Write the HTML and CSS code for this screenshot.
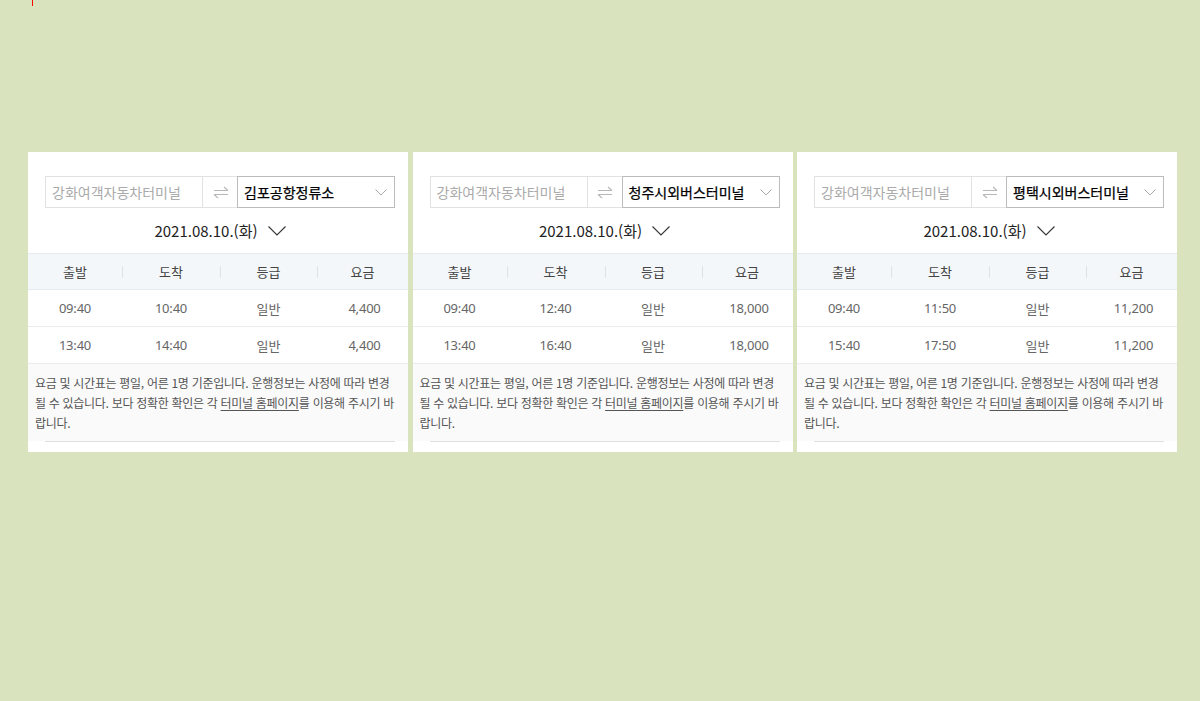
FILE: index.html
```html
<!DOCTYPE html>
<html lang="ko">
<head>
<meta charset="utf-8">
<title>시간표</title>
<link rel="stylesheet" href="styles.css">
</head>
<body>
<div class="marker"></div>
<div class="cards">
  <section class="card">
    <div class="route">
      <div class="from">강화여객자동차터미널</div>
      <div class="swap"><svg width="16" height="13" viewBox="0 0 16 13"><path d="M1 4.5H15M11 1L15 4.5M1 8.5H15M1 8.5L5 12" fill="none" stroke="#b8b8b8" stroke-width="1.1"/></svg></div>
      <div class="to"><span>김포공항정류소</span><svg class="sel-arrow" width="12" height="7" viewBox="0 0 12 7"><path d="M0.5 0.5L6 6L11.5 0.5" fill="none" stroke="#aaa" stroke-width="1"/></svg></div>
    </div>
    <div class="date"><span>2021.08.10.(화)</span><svg width="18" height="10" viewBox="0 0 18 10"><path d="M0.5 0.5L9 9L17.5 0.5" fill="none" stroke="#333" stroke-width="1.1"/></svg></div>
    <div class="thead"><div class="th">출발</div><div class="th">도착</div><div class="th">등급</div><div class="th">요금</div></div>
    <div class="tr"><div class="num">09:40</div><div class="num">10:40</div><div>일반</div><div class="num">4,400</div></div>
    <div class="tr"><div class="num">13:40</div><div class="num">14:40</div><div>일반</div><div class="num">4,400</div></div>
    <p class="notice">요금 및 시간표는 평일, 어른 1명 기준입니다. 운행정보는 사정에 따라 변경 될 수 있습니다. 보다 정확한 확인은 각 <u>터미널 홈페이지</u>를 이용해 주시기 바랍니다.</p>
    <div class="rule"></div>
  </section>
  <section class="card">
    <div class="route">
      <div class="from">강화여객자동차터미널</div>
      <div class="swap"><svg width="16" height="13" viewBox="0 0 16 13"><path d="M1 4.5H15M11 1L15 4.5M1 8.5H15M1 8.5L5 12" fill="none" stroke="#b8b8b8" stroke-width="1.1"/></svg></div>
      <div class="to"><span>청주시외버스터미널</span><svg class="sel-arrow" width="12" height="7" viewBox="0 0 12 7"><path d="M0.5 0.5L6 6L11.5 0.5" fill="none" stroke="#aaa" stroke-width="1"/></svg></div>
    </div>
    <div class="date"><span>2021.08.10.(화)</span><svg width="18" height="10" viewBox="0 0 18 10"><path d="M0.5 0.5L9 9L17.5 0.5" fill="none" stroke="#333" stroke-width="1.1"/></svg></div>
    <div class="thead"><div class="th">출발</div><div class="th">도착</div><div class="th">등급</div><div class="th">요금</div></div>
    <div class="tr"><div class="num">09:40</div><div class="num">12:40</div><div>일반</div><div class="num">18,000</div></div>
    <div class="tr"><div class="num">13:40</div><div class="num">16:40</div><div>일반</div><div class="num">18,000</div></div>
    <p class="notice">요금 및 시간표는 평일, 어른 1명 기준입니다. 운행정보는 사정에 따라 변경 될 수 있습니다. 보다 정확한 확인은 각 <u>터미널 홈페이지</u>를 이용해 주시기 바랍니다.</p>
    <div class="rule"></div>
  </section>
  <section class="card">
    <div class="route">
      <div class="from">강화여객자동차터미널</div>
      <div class="swap"><svg width="16" height="13" viewBox="0 0 16 13"><path d="M1 4.5H15M11 1L15 4.5M1 8.5H15M1 8.5L5 12" fill="none" stroke="#b8b8b8" stroke-width="1.1"/></svg></div>
      <div class="to"><span>평택시외버스터미널</span><svg class="sel-arrow" width="12" height="7" viewBox="0 0 12 7"><path d="M0.5 0.5L6 6L11.5 0.5" fill="none" stroke="#aaa" stroke-width="1"/></svg></div>
    </div>
    <div class="date"><span>2021.08.10.(화)</span><svg width="18" height="10" viewBox="0 0 18 10"><path d="M0.5 0.5L9 9L17.5 0.5" fill="none" stroke="#333" stroke-width="1.1"/></svg></div>
    <div class="thead"><div class="th">출발</div><div class="th">도착</div><div class="th">등급</div><div class="th">요금</div></div>
    <div class="tr"><div class="num">09:40</div><div class="num">11:50</div><div>일반</div><div class="num">11,200</div></div>
    <div class="tr"><div class="num">15:40</div><div class="num">17:50</div><div>일반</div><div class="num">11,200</div></div>
    <p class="notice">요금 및 시간표는 평일, 어른 1명 기준입니다. 운행정보는 사정에 따라 변경 될 수 있습니다. 보다 정확한 확인은 각 <u>터미널 홈페이지</u>를 이용해 주시기 바랍니다.</p>
    <div class="rule"></div>
  </section>
</div>
</body>
</html>
```
FILE: styles.css
```css
html, body {
  margin: 0;
  padding: 0;
}
body {
  background: #d9e3bd;
  font-family: "Noto Sans CJK KR", "Noto Sans", sans-serif;
  color: #333;
  width: 1200px;
  height: 701px;
  position: relative;
}
.marker {
  position: absolute;
  left: 32px;
  top: 0;
  width: 1px;
  height: 6px;
  background: #ff0000;
}
.cards {
  display: flex;
  gap: 4.5px;
  padding: 152px 0 0 28px;
}
.card {
  width: 380px;
  background: #fff;
  padding-top: 24px;
  box-sizing: border-box;
}
.route {
  display: flex;
  height: 32px;
  margin-left: 17px;
}
.from {
  box-sizing: border-box;
  width: 158px;
  border: 1px solid #e2e2e2;
  padding-left: 6px;
  font-size: 14px;
  line-height: 30px;
  color: #aaa;
  white-space: nowrap;
  overflow: hidden;
}
.swap {
  box-sizing: border-box;
  width: 34px;
  border-top: 1px solid #e2e2e2;
  border-bottom: 1px solid #e2e2e2;
  display: flex;
  align-items: center;
  justify-content: center;
  padding-left: 1px;
}
.to {
  box-sizing: border-box;
  width: 158px;
  border: 1px solid #bcbcbc;
  padding: 0 7px 0 6px;
  display: flex;
  align-items: center;
  justify-content: space-between;
  font-size: 14px;
  font-weight: 400;
  color: #000;
  -webkit-text-stroke: 0.25px #000;
  white-space: nowrap;
}
.sel-arrow {
  margin-top: 1px;
  flex: none;
}
.date {
  height: 45px;
  display: flex;
  align-items: center;
  justify-content: center;
  gap: 10px;
  font-size: 15px;
  color: #222;
  padding-left: 4px;
}
.date svg {
  margin-top: 1px;
}
.thead, .tr {
  display: grid;
  grid-template-columns: 94px 98px 97px 91px;
  height: 37px;
  box-sizing: border-box;
  align-items: center;
  font-size: 13px;
  text-align: center;
}
.thead {
  background: #f4f7fa;
  border-top: 1px solid #e6ebf0;
  border-bottom: 1px solid #e6ebf0;
  color: #444;
}
.th {
  position: relative;
}
.th + .th::before {
  content: "";
  position: absolute;
  left: 0;
  top: 50%;
  margin-top: -6px;
  width: 1px;
  height: 12px;
  background: #dde2e7;
}
.tr {
  border-bottom: 1px solid #ececec;
  color: #666;
}
.tr .num {
  font-family: "Noto Sans", "Noto Sans CJK KR", sans-serif;
  letter-spacing: -0.2px;
}
.tr div:last-child {
  padding-left: 4px;
}
.notice {
  margin: 0;
  background: #fafafa;
  padding: 9px 13px 8px 7px;
  font-size: 12px;
  line-height: 20px;
  color: #555;
  letter-spacing: -0.3px;
}
.notice u {
  text-underline-offset: 2px;
}
.rule {
  height: 10px;
  margin: 0 13px 0 17px;
  border-top: 1px solid #e0e0e0;
  background: #fff;
}
```
